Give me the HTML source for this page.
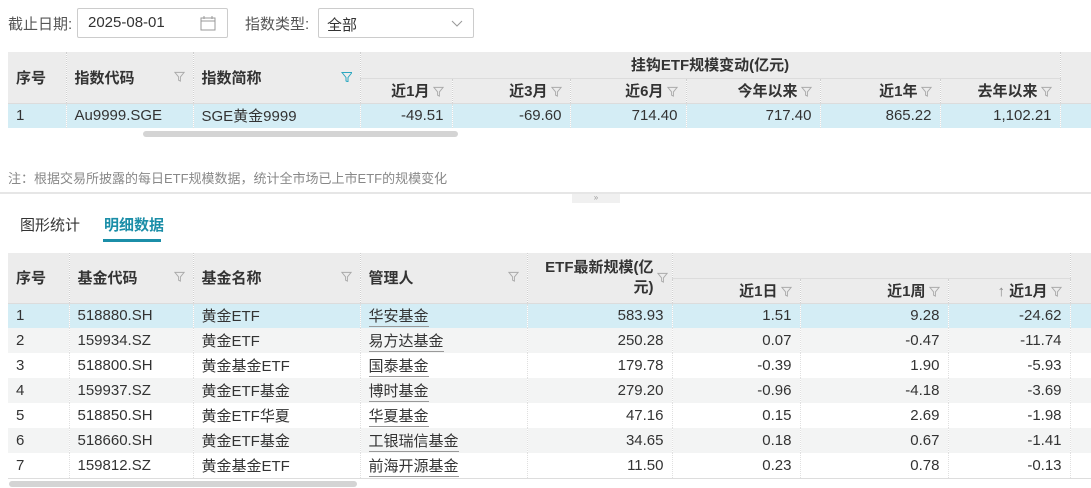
<!DOCTYPE html>
<html><head><meta charset="utf-8"><style>
*{margin:0;padding:0;box-sizing:border-box}
body{width:1091px;height:488px;overflow:hidden;background:#fff;font-family:"Liberation Sans","Noto Sans CJK SC",sans-serif;font-size:14px;color:#333;position:relative}
.abs{position:absolute}
table{border-collapse:collapse;table-layout:fixed;position:absolute;left:8px}
td,th{height:25px;padding:0 8px;white-space:nowrap;overflow:hidden;font-size:15px}
th{background:#ececec;font-weight:bold;color:#333;text-align:left;border-right:1px dotted #d0d0d0;border-bottom:1px solid #dcdcdc}
th.r{text-align:right}
td{border-right:1px dotted #e0e0e0}
td.r{text-align:right}
tr.hl td{background:#d4edf5}
tr.g td{background:#f3f4f4}
.f{display:inline-block;width:11px;height:11px;margin-left:3px;vertical-align:-1px}
.u{border-bottom:1px solid #999;padding-bottom:1px}
</style></head><body>
<svg width="0" height="0" style="position:absolute"><defs><symbol id="fn" viewBox="0 0 12 12"><path d="M1 1.5h10L7 6.5V11L5 10V6.5z" fill="none" stroke="#aaa" stroke-width="1"/></symbol></defs></svg>

<div class="abs" style="left:8px;top:13px;color:#555;font-size:15px">截止日期:</div>
<div class="abs" style="left:77px;top:8px;width:151px;height:30px;border:1px solid #ccc;border-radius:2px;padding:5px 10px;font-size:15px">2025-08-01
<svg class="abs" style="left:122px;top:7px" width="16" height="15" viewBox="0 0 16 15"><rect x="1" y="2" width="14" height="12" fill="none" stroke="#999"/><path d="M1 5h14M4 0v3M12 0v3" stroke="#999"/></svg></div>
<div class="abs" style="left:245px;top:13px;color:#555;font-size:15px">指数类型:</div>
<div class="abs" style="left:318px;top:8px;width:156px;height:30px;border:1px solid #ccc;border-radius:2px;padding:5px 8px;font-size:15px">全部
<svg class="abs" style="left:132px;top:11px" width="12" height="8" viewBox="0 0 12 8"><path d="M1 1l5 5 5-5" fill="none" stroke="#999"/></svg></div>

<table style="top:52px;width:1083px">
<colgroup><col style="width:58px"><col style="width:127px"><col style="width:167px"><col style="width:92px"><col style="width:118px"><col style="width:116px"><col style="width:134px"><col style="width:120px"><col style="width:120px"><col style="width:31px"></colgroup>
<tr><th rowspan="2" style="height:51px">序号</th><th rowspan="2">指数代码<svg class="f" style="float:right;margin-top:4px"><use href="#fn"/></svg></th><th rowspan="2" style="box-shadow:3px 0 4px rgba(0,0,0,.12)">指数简称<svg class="f" style="float:right;margin-top:4px"><path d="M1 1.5h10L7 6.5V11L5 10V6.5z" fill="none" stroke="#2aa7c0"/></svg></th><th colspan="6" style="text-align:center;height:26px">挂钩ETF规模变动(亿元)</th><th rowspan="2"></th></tr>
<tr><th class="r">近1月<svg class="f"><use href="#fn"/></svg></th><th class="r">近3月<svg class="f"><use href="#fn"/></svg></th><th class="r">近6月<svg class="f"><use href="#fn"/></svg></th><th class="r">今年以来<svg class="f"><use href="#fn"/></svg></th><th class="r">近1年<svg class="f"><use href="#fn"/></svg></th><th class="r">去年以来<svg class="f"><use href="#fn"/></svg></th></tr>
<tr class="hl"><td>1</td><td>Au9999.SGE</td><td>SGE黄金9999</td><td class="r">-49.51</td><td class="r">-69.60</td><td class="r">714.40</td><td class="r">717.40</td><td class="r">865.22</td><td class="r">1,102.21</td><td></td></tr>
</table>
<div class="abs" style="left:143px;top:131px;width:315px;height:6px;border-radius:3px;background:#d4d4d4"></div>

<div class="abs" style="left:8px;top:168px;font-size:13px;color:#888">注：根据交易所披露的每日ETF规模数据，统计全市场已上市ETF的规模变化</div>
<div class="abs" style="left:0;top:192px;width:1091px;height:2px;background:#e6e6e6"></div>
<div class="abs" style="left:572px;top:194px;width:48px;height:9px;background:#f0f0f0;font-size:8px;color:#999;text-align:center;line-height:8px">»</div>

<div class="abs" style="left:20px;top:214px;color:#333;font-size:15px">图形统计</div>
<div class="abs" style="left:104px;top:214px;color:#1b8ea8;font-weight:bold;font-size:15px">明细数据</div>
<div class="abs" style="left:103px;top:239px;width:58px;height:3px;background:#1b8ea8"></div>

<table style="top:253px;width:1083px">
<colgroup><col style="width:61px"><col style="width:124px"><col style="width:167px"><col style="width:167px"><col style="width:145px"><col style="width:128px"><col style="width:148px"><col style="width:122px"><col style="width:21px"></colgroup>
<tr><th rowspan="2" style="height:49px">序号</th><th rowspan="2">基金代码<svg class="f" style="float:right;margin-top:4px"><use href="#fn"/></svg></th><th rowspan="2">基金名称<svg class="f" style="float:right;margin-top:4px"><use href="#fn"/></svg></th><th rowspan="2">管理人<svg class="f" style="float:right;margin-top:4px"><use href="#fn"/></svg></th><th rowspan="2" class="r" style="line-height:20px;padding-right:4px"><div style="float:right;margin-top:10px"><svg class="f"><use href="#fn"/></svg></div>ETF最新规模(亿<br>元)</th><th colspan="3" style="height:25px"></th><th rowspan="2"></th></tr>
<tr><th class="r" style="height:24px">近1日<svg class="f"><use href="#fn"/></svg></th><th class="r">近1周<svg class="f"><use href="#fn"/></svg></th><th class="r"><span style="color:#888;font-weight:normal">↑</span> 近1月<svg class="f"><use href="#fn"/></svg></th></tr>
<tr class="hl"><td>1</td><td>518880.SH</td><td>黄金ETF</td><td><span class="u">华安基金</span></td><td class="r">583.93</td><td class="r">1.51</td><td class="r">9.28</td><td class="r">-24.62</td><td></td></tr>
<tr class="g"><td>2</td><td>159934.SZ</td><td>黄金ETF</td><td><span class="u">易方达基金</span></td><td class="r">250.28</td><td class="r">0.07</td><td class="r">-0.47</td><td class="r">-11.74</td><td></td></tr>
<tr><td>3</td><td>518800.SH</td><td>黄金基金ETF</td><td><span class="u">国泰基金</span></td><td class="r">179.78</td><td class="r">-0.39</td><td class="r">1.90</td><td class="r">-5.93</td><td></td></tr>
<tr class="g"><td>4</td><td>159937.SZ</td><td>黄金ETF基金</td><td><span class="u">博时基金</span></td><td class="r">279.20</td><td class="r">-0.96</td><td class="r">-4.18</td><td class="r">-3.69</td><td></td></tr>
<tr><td>5</td><td>518850.SH</td><td>黄金ETF华夏</td><td><span class="u">华夏基金</span></td><td class="r">47.16</td><td class="r">0.15</td><td class="r">2.69</td><td class="r">-1.98</td><td></td></tr>
<tr class="g"><td>6</td><td>518660.SH</td><td>黄金ETF基金</td><td><span class="u">工银瑞信基金</span></td><td class="r">34.65</td><td class="r">0.18</td><td class="r">0.67</td><td class="r">-1.41</td><td></td></tr>
<tr style="border-bottom:1px solid #ddd"><td>7</td><td>159812.SZ</td><td>黄金基金ETF</td><td><span class="u">前海开源基金</span></td><td class="r">11.50</td><td class="r">0.23</td><td class="r">0.78</td><td class="r">-0.13</td><td></td></tr>
</table>
<div class="abs" style="left:9px;top:481px;width:348px;height:6px;border-radius:3px;background:#d4d4d4"></div>
</body></html>
